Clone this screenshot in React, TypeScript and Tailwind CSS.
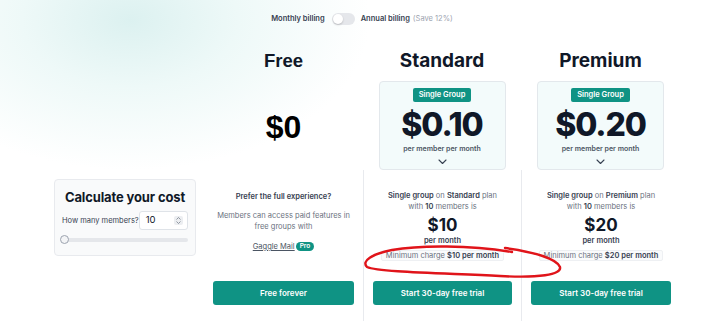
import React from 'react';

const Chevron = () => (
  <svg width="9" height="6" viewBox="0 0 9 6" fill="none" className="mt-[5px]">
    <path d="M1 1l3.5 3.5L8 1" stroke="#374151" strokeWidth="1.1" strokeLinecap="round" strokeLinejoin="round" />
  </svg>
);

const PriceCard = ({ price }: { price: string }) => (
  <div className="mt-[8px] flex h-[89px] w-[127px] flex-col items-center rounded-[4px] border border-[#e3e8ec] bg-[#f3fbfb] pt-[6px]">
    <span className="flex h-[14px] items-center rounded-[2px] bg-[#0f9384] px-[6px] text-[7.5px] font-semibold text-white">Single Group</span>
    <span className="mt-[7px] text-[32px] font-extrabold leading-none tracking-[-0.035em] text-[#101828]">{price}</span>
    <span className="mt-[3px] whitespace-nowrap text-[7px] font-semibold leading-[10px] text-[#4b5563]">per member per month</span>
    <Chevron />
  </div>
);

const PlanDetails = ({ plan, total }: { plan: string; total: string }) => (
  <div className="flex h-[151px] flex-col items-center border-l border-[#e8eaee] px-[9px] pb-[16px] pt-[20px]">
    <p className="whitespace-nowrap text-center text-[7.5px] leading-[11px] text-[#6b7280]">
      <span className="font-semibold text-[#374151]">Single group</span> on <span className="font-semibold text-[#374151]">{plan}</span> plan
      <br />
      with <span className="font-semibold text-[#374151]">10</span> members is
    </p>
    <span className="mt-[3px] text-[17px] font-bold leading-[20px] text-[#101828]">{total}</span>
    <span className="text-[7.5px] font-semibold leading-[11px] text-[#374151]">per month</span>
    <div className="mt-[4px] flex h-[11px] items-center whitespace-nowrap rounded-[2px] border border-[#eef0f3] bg-[#fafbfc] px-[4px] text-[7.5px] text-[#6b7280]">
      Minimum charge&nbsp;<span className="font-semibold text-[#374151]">{total} per month</span>
    </div>
    <button className="mt-auto h-[24px] w-full rounded-[3px] bg-[#0f9384] text-[8px] font-semibold text-white">Start 30-day free trial</button>
  </div>
);

export default function App() {
  return (
    <div className="relative h-[321px] w-[716px] overflow-hidden bg-[radial-gradient(ellipse_240px_150px_at_130px_20px,#dcf1f0_0%,#eef9f8_45%,#ffffff_100%)] font-['Inter',sans-serif]">
      {/* billing toggle */}
      <div className="flex h-[38px] items-start justify-center pl-[8px] pt-[13px] text-[7.5px]">
        <span className="font-semibold leading-[12px] text-[#374151]">Monthly billing</span>
        <span className="ml-[7px] flex h-[12px] w-[23px] items-center rounded-full bg-[#e5e7eb] px-[1px]">
          <span className="h-[10px] w-[10px] rounded-full bg-white shadow-[0_1px_2px_rgba(0,0,0,0.2)]" />
        </span>
        <span className="ml-[6px] font-semibold leading-[12px] text-[#374151]">Annual billing</span>
        <span className="ml-[3px] leading-[12px] text-[#9ca3af]">(Save 12%)</span>
      </div>

      <div className="mt-[11px] grid grid-cols-[204px_159px_158px_159px]">
        {/* header row */}
        <div />
        <div className="flex h-[121px] flex-col items-center">
          <span className="font-['Liberation_Sans',Arial,sans-serif] text-[18.5px] font-bold leading-[24px] text-[#101828]">Free</span>
          <span className="mt-[38px] font-['Liberation_Sans',Arial,sans-serif] text-[32px] font-bold leading-none text-black">$0</span>
        </div>
        <div className="flex h-[121px] flex-col items-center">
          <span className="text-[19px] font-bold leading-[24px] text-[#101828]">Standard</span>
          <PriceCard price="$0.10" />
        </div>
        <div className="flex h-[121px] flex-col items-center">
          <span className="text-[19px] font-bold leading-[24px] text-[#101828]">Premium</span>
          <PriceCard price="$0.20" />
        </div>

        {/* details row */}
        <div className="pt-[9px]">
          <div className="ml-[54px] flex h-[77px] w-[142px] flex-col items-center rounded-[4px] border border-[#e8eaee] bg-[#f9fafb] px-[7px] pt-[8px]">
            <span className="whitespace-nowrap text-[13px] font-bold leading-[18px] tracking-[-0.01em] text-[#101828]">Calculate your cost</span>
            <div className="mt-[5px] flex w-full items-center justify-between">
              <span className="whitespace-nowrap text-[7.5px] text-[#374151]">How many members?</span>
              <div className="flex h-[19px] w-[50px] items-center justify-between rounded-[3px] border border-[#dfe3e8] bg-white pl-[6px] pr-[4px]">
                <span className="text-[9.5px] text-[#111827]">10</span>
                <span className="flex h-[9px] w-[9px] flex-col items-center justify-center gap-[1px] rounded-[2px] bg-[#eceef1]">
                  <svg width="5" height="3" viewBox="0 0 5 3"><path d="M0.5 2.5L2.5 0.5L4.5 2.5" stroke="#6b7280" strokeWidth="0.7" fill="none" /></svg>
                  <svg width="5" height="3" viewBox="0 0 5 3"><path d="M0.5 0.5L2.5 2.5L4.5 0.5" stroke="#6b7280" strokeWidth="0.7" fill="none" /></svg>
                </span>
              </div>
            </div>
            <div className="relative mt-[8px] h-[4px] w-full rounded-full bg-[#e5e7eb]">
              <span className="absolute left-[-2px] top-[-3px] h-[9px] w-[9px] rounded-full border border-[#9ca3af] bg-[#f3f4f6]" />
            </div>
          </div>
        </div>

        <div className="flex h-[151px] flex-col items-center px-[9px] pb-[16px] pt-[21px]">
          <span className="whitespace-nowrap text-[7.5px] font-semibold leading-[11px] text-[#374151]">Prefer the full experience?</span>
          <p className="mt-[8px] whitespace-nowrap text-center text-[7.5px] leading-[11px] text-[#6b7280]">
            Members can access paid features in
            <br />
            free groups with
          </p>
          <div className="mt-[9px] flex items-center gap-[1px]">
            <span className="text-[7.5px] leading-[11px] text-[#4b5563] underline">Gaggle Mail</span>
            <span className="rounded-full bg-[#0f9384] px-[4px] text-[6.5px] font-semibold leading-[9px] text-white">Pro</span>
          </div>
          <button className="mt-auto h-[24px] w-full rounded-[3px] bg-[#0f9384] text-[8px] font-semibold text-white">Free forever</button>
        </div>

        <PlanDetails plan="Standard" total="$10" />
        <PlanDetails plan="Premium" total="$20" />
      </div>

      {/* hand-drawn annotation */}
      <svg className="pointer-events-none absolute left-0 top-0" width="716" height="321" viewBox="0 0 716 321" fill="none">
        <path
          d="M512 252 C 470 245, 420 245, 392 250 C 372 254, 361 261, 367 267 C 378 272, 440 273, 500 276 C 538 278, 562 275, 560 267 C 557 259, 535 252, 505 248"
          stroke="#e0141a"
          strokeWidth="2.4"
          strokeLinecap="round"
        />
      </svg>
    </div>
  );
}
